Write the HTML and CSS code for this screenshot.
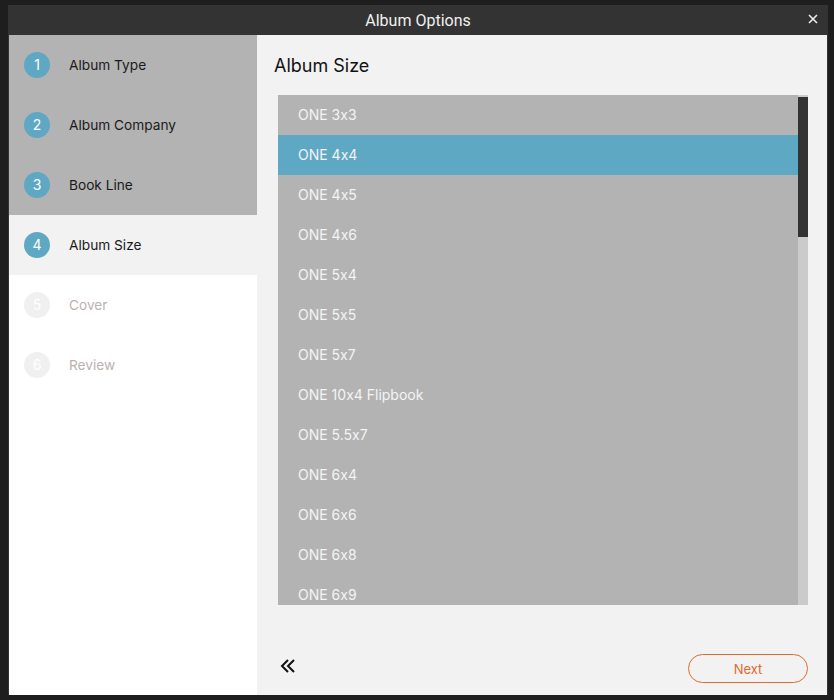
FILE: index.html
```html
<!DOCTYPE html>
<html lang="en">
<head>
    <meta charset="UTF-8">
    <title>Album Options</title>
    <link rel="stylesheet" href="styles.css">
</head>
<body>
    <div class="dialog">
        <div class="titlebar">
            <span class="titlebar-text">Album Options</span>
            <button class="close" aria-label="Close">
                <svg width="10" height="10" viewBox="0 0 10 10">
                    <path d="M1 1 L9 9 M9 1 L1 9" stroke="#eee" stroke-width="1.6"/>
                </svg>
            </button>
        </div>

        <div class="dialog-body">
            <!-- Steps -->
            <ul class="steps">
                <li class="step done"><span class="num">1</span>Album Type</li>
                <li class="step done"><span class="num">2</span>Album Company</li>
                <li class="step done"><span class="num">3</span>Book Line</li>
                <li class="step current"><span class="num">4</span>Album Size</li>
                <li class="step todo"><span class="num">5</span>Cover</li>
                <li class="step todo"><span class="num">6</span>Review</li>
            </ul>

            <!-- Panel -->
            <div class="panel">
                <h2 class="panel-title">Album Size</h2>
                <div class="size-box">
                    <ul class="size-list">
                        <li>ONE 3x3</li>
                        <li class="selected">ONE 4x4</li>
                        <li>ONE 4x5</li>
                        <li>ONE 4x6</li>
                        <li>ONE 5x4</li>
                        <li>ONE 5x5</li>
                        <li>ONE 5x7</li>
                        <li>ONE 10x4 Flipbook</li>
                        <li>ONE 5.5x7</li>
                        <li>ONE 6x4</li>
                        <li>ONE 6x6</li>
                        <li>ONE 6x8</li>
                        <li>ONE 6x9</li>
                    </ul>
                    <div class="scrollbar"><div class="thumb"></div></div>
                </div>

                <div class="panel-footer">
                    <button class="back" aria-label="Back">
                        <svg width="16" height="14" viewBox="0 0 16 14">
                            <path d="M8 1 L2 7 L8 13 M14 1 L8 7 L14 13" fill="none" stroke="#111" stroke-width="2"/>
                        </svg>
                    </button>
                    <button class="next-btn">Next</button>
                </div>
            </div>
        </div>
    </div>
</body>
</html>
```

FILE: styles.css
```css
* {
    box-sizing: border-box;
}

body {
    margin: 0;
    height: 700px;
    overflow: hidden;
    background: #1e1e1e;
    font-family: Inter, "Noto Sans", sans-serif;
    font-feature-settings: "calt" 0;
}

/* Dialog shell */
.dialog {
    width: 820px;
    margin: 5px 0 0 8px;
    background: #333;
}

.titlebar {
    position: relative;
    height: 30px;
    display: flex;
    align-items: center;
    justify-content: center;
    color: #f0f0f0;
    font-family: Roboto, sans-serif;
    font-size: 16px;
}

.close {
    position: absolute;
    right: 10px;
    top: 9px;
    border: none;
    background: none;
    padding: 0;
    line-height: 0;
    cursor: pointer;
}

.dialog-body {
    display: flex;
    height: 660px;
    margin-left: 1px;
    margin-right: 1px;
}

/* Steps sidebar */
.steps {
    list-style: none;
    margin: 0;
    padding: 0;
    width: 248px;
    background: #fff;
}

.step {
    height: 60px;
    display: flex;
    align-items: center;
    padding-left: 15px;
    padding-bottom: 1px;
    font-size: 13.7px;
    color: #1a1a1a;
}

.step .num {
    width: 26px;
    height: 26px;
    border-radius: 50%;
    background: #5fa8c3;
    color: #fff;
    display: flex;
    align-items: center;
    justify-content: center;
    margin-right: 19px;
    font-size: 14px;
}

.step.done {
    background: #b3b3b3;
}

.step.current {
    background: #f2f2f2;
}

.step.todo {
    color: #bcb1b1;
}

.step.todo .num {
    background: #f0f0f0;
}

/* Right panel */
.panel {
    flex: 1;
    background: #f2f2f2;
    display: flex;
    flex-direction: column;
    padding: 0 19px 0 21px;
}

.panel-title {
    margin: 20px 0 0 -4px;
    height: 40px;
    font-size: 18px;
    font-weight: 400;
    color: #111;
}

.size-box {
    display: flex;
    height: 510px;
    overflow: hidden;
    background: #b3b3b3;
}

.size-list {
    list-style: none;
    margin: 0;
    padding: 0;
    flex: 1;
}

.size-list li {
    height: 40px;
    line-height: 40px;
    padding-left: 20px;
    color: #f4f4f4;
    font-size: 14px;
}

.size-list li.selected {
    background: #5fa8c3;
}

.scrollbar {
    width: 10px;
    background: #cbcbcb;
    padding-top: 2px;
}

.thumb {
    height: 140px;
    background: #333;
}

.panel-footer {
    flex: 1;
    display: flex;
    justify-content: space-between;
    align-items: flex-end;
    padding-bottom: 12px;
}

.back {
    border: none;
    background: none;
    padding: 0;
    margin-left: 2px;
    margin-bottom: 10px;
    line-height: 0;
    cursor: pointer;
}

.next-btn {
    width: 120px;
    height: 29px;
    border: 1.5px solid #e06a2b;
    border-radius: 15px;
    background: transparent;
    color: #e06a2b;
    font-family: Inter, sans-serif;
    font-size: 13px;
    cursor: pointer;
}
```
